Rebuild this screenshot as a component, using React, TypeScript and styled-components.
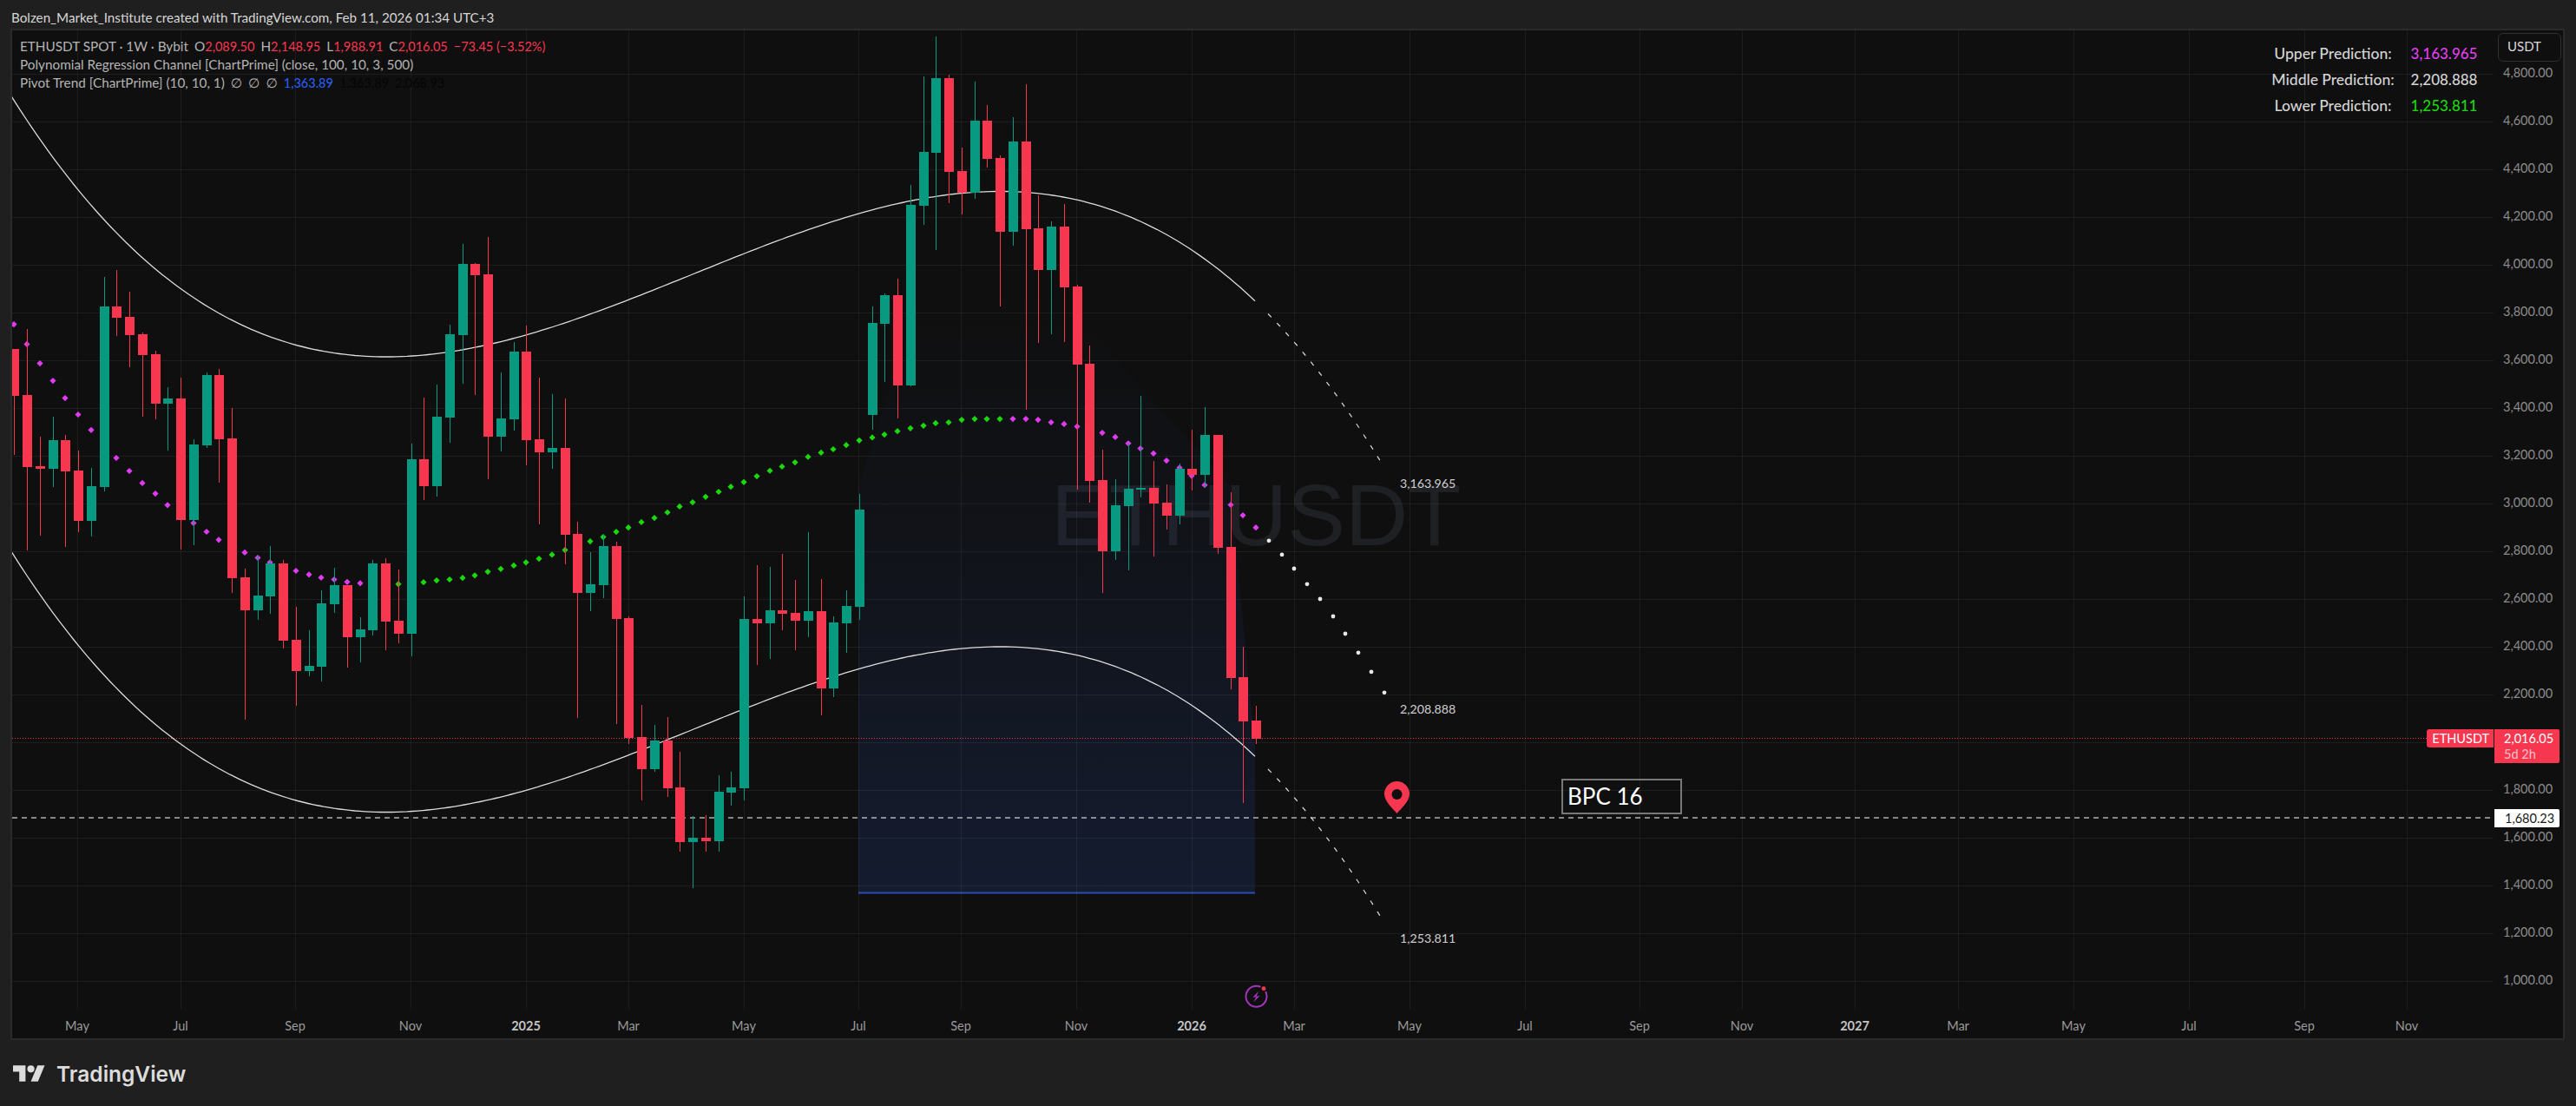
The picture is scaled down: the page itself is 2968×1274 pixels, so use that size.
import React from "react";
import styled, { createGlobalStyle } from "styled-components";

const UI_FONT = `Lato, "Noto Sans", "DejaVu Sans", sans-serif`;

const RED = "#f7374f";
const GREEN = "#089981";
const MAGENTA = "#e03bf2";
const LIME = "#1bd80e";
const BLUE_ZONE = "#2a4fb0";

// page coordinates of the plot area, the svg viewBox uses them directly
const PANE = { x: 14, y: 35, w: 2859, h: 1128 };

type Row = ["r" | "g", number, number, number, number];
type Candle = { up: boolean; wickTop: number; top: number; bottom: number; wickBottom: number };

// rows were read off zoomed crops: y = origin + value / scale
const scan = (origin: number, scale: number, rows: Row[]): Candle[] =>
  rows.map(([c, a, b, d, e]) => ({
    up: c === "g",
    wickTop: origin + a / scale,
    top: origin + b / scale,
    bottom: origin + d / scale,
    wickBottom: origin + e / scale,
  }));

const CANDLES: Candle[] = [
  ...scan(280, 2.8, [
    ["r", 342, 342, 492, 683], ["r", 277, 490, 721, 990], ["r", 625, 720, 728, 943], ["g", 560, 636, 728, 787],
    ["r", 620, 636, 736, 980], ["r", 670, 734, 896, 932], ["g", 726, 784, 896, 945], ["g", 110, 204, 787, 800],
    ["r", 87, 204, 241, 300], ["r", 157, 238, 297, 400], ["r", 288, 294, 361, 560], ["r", 348, 358, 518, 568],
    ["g", 465, 501, 518, 668], ["r", 434, 501, 893, 987], ["g", 633, 650, 893, 973], ["g", 418, 426, 652, 660],
    ["r", 406, 426, 633, 772], ["r", 532, 630, 1081, 1128], ["r", 1050, 1078, 1184, 1536], ["g", 1008, 1137, 1184, 1215],
    ["g", 977, 1033, 1140, 1196], ["r", 1022, 1033, 1282, 1308], ["r", 1173, 1280, 1380, 1492], ["g", 1249, 1364, 1380, 1397],
    ["g", 1120, 1162, 1366, 1414], ["g", 1048, 1103, 1165, 1193], ["r", 1103, 1103, 1271, 1369], ["g", 1207, 1246, 1271, 1352],
    ["g", 1022, 1033, 1249, 1266], ["r", 1016, 1033, 1221, 1313], ["r", 1053, 1218, 1260, 1291], ["g", 647, 697, 1260, 1333],
    ["r", 498, 697, 784, 829], ["g", 456, 560, 784, 818], ["g", 263, 294, 563, 644], ["g", 3, 67, 297, 454],
    ["r", 64, 67, 104, 490], ["r", -20, 101, 624, 762], ["g", 418, 566, 624, 672], ["g", 319, 350, 568, 605],
    ["r", 266, 350, 636, 717], ["r", 434, 633, 675, 907], ["g", 487, 661, 675, 728], ["r", 501, 661, 941, 1036],
    ["r", 899, 938, 1128, 1531], ["g", 997, 1100, 1128, 1187], ["g", 940, 977, 1103, 1145],
  ]),
  ...scan(280, 2.063, [
    ["r", 710, 720, 893, 1143], ["r", 888, 891, 1176, 1190], ["r", 1098, 1174, 1250, 1325], ["g", 1145, 1182, 1250, 1256],
    ["r", 1126, 1182, 1296, 1316], ["r", 1209, 1294, 1424, 1446], ["g", 1362, 1413, 1424, 1533], ["r", 1360, 1413, 1421, 1446],
    ["g", 1265, 1304, 1422, 1446], ["g", 1257, 1294, 1306, 1337], ["g", 840, 893, 1296, 1325], ["r", 765, 893, 904, 1003],
    ["g", 770, 873, 904, 988], ["r", 739, 873, 881, 920], ["r", 800, 879, 897, 968], ["g", 687, 875, 897, 937],
    ["r", 798, 875, 1058, 1122], ["g", 887, 902, 1058, 1079], ["g", 825, 862, 904, 974], ["g", 596, 633, 864, 895],
  ]),
  ...scan(30, 3, [
    ["g", 969, 1026, 1344, 1395], ["g", 924, 930, 1029, 1230], ["r", 873, 930, 1242, 1356], ["g", 549, 618, 1242, 1245],
    ["g", 174, 435, 621, 687], ["g", 36, 180, 438, 774], ["r", 168, 180, 504, 612], ["r", 420, 501, 576, 651],
    ["g", 192, 327, 576, 597], ["r", 273, 327, 459, 489], ["r", 447, 456, 711, 969], ["g", 315, 399, 711, 759],
    ["r", 201, 399, 702, 1326], ["r", 585, 699, 843, 1095], ["g", 675, 693, 843, 1065], ["r", 615, 693, 903, 1092],
  ]),
  ...scan(280, 2.063, [["r", 99, 103, 289, 585], ["r", 243, 287, 565, 617]]),
  ...scan(420, 2.8, [
    ["r", 275, 372, 602, 735], ["g", 370, 454, 602, 629], ["g", 254, 400, 456, 663], ["g", 101, 398, 402, 428],
    ["r", 312, 398, 447, 618], ["r", 387, 445, 487, 531], ["g", 320, 336, 487, 514], ["r", 210, 336, 356, 405],
    ["g", 137, 227, 356, 397], ["r", 227, 227, 591, 609], ["r", 412, 588, 1011, 1046], ["r", 911, 1008, 1151, 1413],
    ["r", 1100, 1148, 1207, 1223],
  ]),
];

const barX = (i: number) => Math.round(16.26 + 14.752 * i);

const toY = (origin: number, scale: number, values: number[]) => values.map((v) => origin + v / scale);

// pivot trend marks, one for each bar
const TREND = [
  ...toY(280, 2.8, [
    262, 326, 388, 444, 500, 553, 603, 650, 693, 735, 774, 808, 845, 875, 903, 931, 957, 978, 998, 1015, 1030, 1045, 1057,
    1069, 1079, 1085, 1093, 1097, 1099, 1100, 1100, 1098, 1094, 1088, 1085, 1080, 1072, 1060, 1051, 1040, 1030, 1018, 1005,
    990, 975, 962, 948,
  ]),
  ...toY(280, 2.063, [
    686, 676, 663, 653, 640, 626, 616, 603, 591, 579, 568, 554, 541, 531, 521, 508, 498, 490, 480, 469, 462, 455, 447, 440,
    434, 428, 426, 420, 418, 418, 418, 418, 418, 420, 426, 430, 436, 443, 451, 461, 476, 488, 500, 517, 534, 553, 575, 598,
    622, 647, 676,
  ]),
];
const trendColor = (i: number) => (i < 30 ? MAGENTA : i < 78 ? LIME : MAGENTA);

const PROJECTION_Y = toY(420, 2.8, [568, 613, 658, 708, 756, 812, 868, 929, 991, 1058]);

// the channel is a cubic regression, so the edges are drawn from the fitted curve
const channel = (x: number) => {
  const u = x - 445;
  return 411 + 3.235e-6 * ((u * u * u) / 3 - (707 * u * u) / 2);
};
const BAND_GAP = 524.5;

const channelPath = (from: number, to: number, dy = 0) => {
  let d = `M${from} ${channel(from) + dy}`;
  for (let x = from + 6; x < to; x += 6) d += ` L${x} ${(channel(x) + dy).toFixed(1)}`;
  return `${d} L${to} ${(channel(to) + dy).toFixed(1)}`;
};

const priceY = (p: number) => 85 + (4800 - p) * 0.275;
const PRICES = Array.from({ length: 20 }, (_, i) => 4800 - i * 200);
const LAST_PRICE_ROW = 2000; // hidden under the last price tag

const TICKS: { x: number; label: string; year?: boolean }[] = [
  { x: 89, label: "May" }, { x: 208, label: "Jul" }, { x: 340, label: "Sep" }, { x: 473, label: "Nov" },
  { x: 606, label: "2025", year: true }, { x: 724, label: "Mar" }, { x: 857, label: "May" }, { x: 989, label: "Jul" },
  { x: 1107, label: "Sep" }, { x: 1240, label: "Nov" }, { x: 1373, label: "2026", year: true }, { x: 1491, label: "Mar" },
  { x: 1624, label: "May" }, { x: 1757, label: "Jul" }, { x: 1889, label: "Sep" }, { x: 2007, label: "Nov" },
  { x: 2137, label: "2027", year: true }, { x: 2256, label: "Mar" }, { x: 2389, label: "May" }, { x: 2522, label: "Jul" },
  { x: 2655, label: "Sep" }, { x: 2773, label: "Nov" },
];

const GlobalStyle = createGlobalStyle`
  html, body {
    margin: 0;
    background: #1f1f1f;
    overflow: hidden;
  }
`;

const Page = styled.div`
  width: 2968px;
  height: 1274px;
  display: flex;
  flex-direction: column;
  background: #1f1f1f;
  font-family: ${UI_FONT};
`;

const Header = styled.div`
  height: 33px;
  box-sizing: border-box;
  padding: 10px 0 0 13px;
  font-size: 15.2px;
  line-height: 20px;
  color: #d6d6d6;
  white-space: nowrap;
`;

const Frame = styled.div`
  margin-left: 12px;
  width: 2943px;
  height: 1165px;
  box-sizing: border-box;
  border: 2px solid #2a2a2a;
  display: grid;
  grid-template-columns: 2859px 80px;
  grid-template-rows: 1128px 33px;
  background: #0f0f0f;
`;

const Pane = styled.div`
  position: relative;
  overflow: hidden;
`;

const Plot = styled.svg`
  position: absolute;
  inset: 0;
  display: block;
`;

const Watermark = styled.div`
  position: absolute;
  left: 1197px;
  top: 503px;
  font-family: "Liberation Sans", sans-serif;
  font-size: 100px;
  line-height: 110px;
  color: #1f2024;
  white-space: nowrap;
`;

const Legend = styled.div`
  position: absolute;
  left: 9px;
  top: 8px;
  font-size: 15.3px;
  line-height: 21px;
  color: #b4b4b4;
  white-space: nowrap;
`;

const LegendRow = styled.div`
  display: flex;
  align-items: baseline;
  gap: 7px;
`;

const Value = styled.span<{ $color?: string }>`
  color: ${(p) => p.$color ?? "inherit"};
  font-size: 14.5px;
`;

const PredictionTable = styled.div`
  position: absolute;
  right: 9px;
  top: 11px;
  display: grid;
  grid-template-columns: 160px 96px;
  grid-auto-rows: 30px;
  align-items: center;
  justify-items: center;
  font-size: 17.5px;
  font-weight: 500;
  color: #d4d4d4;

  ${Value} {
    font-size: 17px;
  }
`;

const ChartNote = styled.div<{ $left: number; $top: number }>`
  position: absolute;
  left: ${(p) => p.$left - PANE.x}px;
  top: ${(p) => p.$top - PANE.y - 10}px;
  font-size: 14.2px;
  line-height: 20px;
  color: #cfcfcf;
`;

const NoteBox = styled.div`
  position: absolute;
  left: 1785px;
  top: 862px;
  width: 139px;
  height: 41px;
  box-sizing: border-box;
  border: 2px solid #787878;
  padding-left: 5px;
  font-size: 26px;
  line-height: 36px;
  color: #ffffff;
`;

const PriceAxis = styled.div`
  position: relative;
  box-sizing: border-box;
  padding: 20.5px 0 0 11px;
  display: flex;
  flex-direction: column;
`;

const PriceLabel = styled.div`
  flex: 0 0 55px;
  line-height: 55px;
  font-size: 14.5px;
  color: #8c8c8c;
`;

const UnitButton = styled.div`
  position: absolute;
  left: 5px;
  top: 3px;
  width: 73px;
  height: 33px;
  box-sizing: border-box;
  border: 1px solid #303030;
  border-radius: 6px;
  background: #0f0f0f;
  padding-left: 10px;
  font-size: 15px;
  line-height: 28px;
  color: #d8d8d8;
`;

const SymbolTag = styled.div`
  position: absolute;
  right: 100%;
  top: 805px;
  height: 21px;
  box-sizing: border-box;
  padding: 0 5px 0 6px;
  border-radius: 3px 0 0 3px;
  background: ${RED};
  font-size: 14.5px;
  line-height: 21px;
  color: #ffffff;
`;

const PriceTag = styled.div`
  position: absolute;
  left: 1px;
  top: 805px;
  width: 75px;
  height: 39px;
  box-sizing: border-box;
  padding: 2px 0 0 11px;
  border-radius: 0 2px 2px 0;
  background: ${RED};
  font-size: 14.5px;
  line-height: 18px;
  color: #ffffff;
`;

const Countdown = styled.div`
  color: #ffc2cb;
`;

const LevelTag = styled.div`
  position: absolute;
  left: 1px;
  top: 897px;
  width: 75px;
  height: 21px;
  box-sizing: border-box;
  padding-left: 12px;
  border-radius: 0 2px 2px 0;
  background: #ffffff;
  font-size: 14.5px;
  line-height: 21px;
  color: #1a1a1a;
`;

const TimeAxis = styled.div`
  grid-column: 1 / 3;
  position: relative;
`;

const TimeTick = styled.span<{ $year?: boolean }>`
  position: absolute;
  top: 9px;
  transform: translateX(-50%);
  font-size: 14.5px;
  line-height: 20px;
  font-weight: ${(p) => (p.$year ? 700 : 400)};
  color: ${(p) => (p.$year ? "#c4c4c4" : "#9a9a9a")};
`;

const Footer = styled.div`
  display: flex;
  align-items: center;
  gap: 13px;
  padding: 25px 0 0 15px;
`;

const LogoMark = styled.svg`
  display: block;
  width: 37px;
  height: 29px;
`;

const LogoText = styled.span`
  font-family: Inter, "Noto Sans", sans-serif;
  font-size: 24.5px;
  line-height: 29px;
  font-weight: 600;
  color: #dcdcdc;
`;

const Chart = () => (
  <Plot width={PANE.w} height={PANE.h} viewBox={`${PANE.x} ${PANE.y} ${PANE.w} ${PANE.h}`}>
    <defs>
      <linearGradient id="zone" gradientUnits="userSpaceOnUse" x1="0" y1="340" x2="0" y2="1029">
        <stop offset="0" stopColor={BLUE_ZONE} stopOpacity="0" />
        <stop offset="0.4" stopColor={BLUE_ZONE} stopOpacity="0.06" />
        <stop offset="1" stopColor={BLUE_ZONE} stopOpacity="0.2" />
      </linearGradient>
    </defs>

    <polygon points="989,1029 989,560 1060,340 1220,340 1417,560 1446,860 1446,1029" fill="url(#zone)" />
    <rect x="989" y="1027.5" width="457" height="2" fill={BLUE_ZONE} />

    <g stroke="#ffffff" strokeOpacity="0.06" shapeRendering="crispEdges">
      {PRICES.map((p) => (
        <line key={p} x1={PANE.x} x2={PANE.x + PANE.w} y1={Math.round(priceY(p))} y2={Math.round(priceY(p))} />
      ))}
      {TICKS.map((t) => (
        <line key={t.x} x1={t.x} x2={t.x} y1={PANE.y} y2={PANE.y + PANE.h} />
      ))}
    </g>

    <line x1={PANE.x} x2={PANE.x + PANE.w} y1="850.5" y2="850.5" stroke={RED} strokeDasharray="1 2" />
    <line x1={PANE.x} x2={PANE.x + PANE.w} y1="942" y2="942" stroke="#ffffff" strokeDasharray="6 5" />

    <g fill="none" stroke="#dcdcdc">
      <path d={channelPath(13, 1446)} strokeWidth="1.3" />
      <path d={channelPath(13, 1446, BAND_GAP)} strokeWidth="1.3" />
      <path d={channelPath(1461, 1590)} strokeWidth="1.2" strokeDasharray="5.5 9.3" />
      <path d={channelPath(1461, 1590, BAND_GAP)} strokeWidth="1.2" strokeDasharray="5.5 9.3" />
    </g>

    {TREND.map((y, i) => {
      const x = barX(i);
      return (
        <polygon key={i} points={`${x},${y - 3.6} ${x + 3.6},${y} ${x},${y + 3.6} ${x - 3.6},${y}`} fill={trendColor(i)} />
      );
    })}
    {PROJECTION_Y.map((y, i) => (
      <circle key={i} cx={barX(98 + i)} cy={y} r="2.4" fill="#e8e8e8" />
    ))}

    <g shapeRendering="crispEdges">
      {CANDLES.map((c, i) => {
        const x = barX(i);
        const color = c.up ? GREEN : RED;
        return (
          <g key={i} fill={color}>
            <rect x={x} y={c.wickTop} width="1" height={c.wickBottom - c.wickTop} />
            <rect x={x - 5} y={c.top} width="11" height={c.bottom - c.top} />
          </g>
        );
      })}
    </g>

    <path
      d="M1609.5 900a14.5 14.5 0 0 1 14.5 14.5c0 9-10 17-14.5 22.5c-4.5-5.5-14.5-13.5-14.5-22.5a14.5 14.5 0 0 1 14.5-14.5z"
      fill={RED}
    />
    <circle cx="1609.5" cy="915" r="6" fill="#0f0f0f" />

    <circle cx="1447.5" cy="1147.7" r="12" fill="none" stroke="#a235bd" strokeWidth="2" />
    <path d="M1450 1141.7L1443.3 1149L1447.3 1148.3L1444.3 1154.3L1451.7 1147L1447.7 1147.7Z" fill="#a235bd" />
    <circle cx="1456" cy="1138.7" r="3.2" fill={RED} stroke="#0f0f0f" strokeWidth="1.5" />
  </Plot>
);

const App: React.FC = () => (
  <Page>
    <GlobalStyle />
    <Header>Bolzen_Market_Institute created with TradingView.com, Feb 11, 2026 01:34 UTC+3</Header>

    <Frame>
      <Pane>
        <Watermark>ETHUSDT</Watermark>
        <Chart />

        <Legend>
          <LegendRow>
            <span>ETHUSDT SPOT · 1W · Bybit</span>
            <span>O<Value $color={RED}>2,089.50</Value></span>
            <span>H<Value $color={RED}>2,148.95</Value></span>
            <span>L<Value $color={RED}>1,988.91</Value></span>
            <span>C<Value $color={RED}>2,016.05</Value></span>
            <Value $color={RED}>−73.45 (−3.52%)</Value>
          </LegendRow>
          <LegendRow>Polynomial Regression Channel [ChartPrime] (close, 100, 10, 3, 500)</LegendRow>
          <LegendRow>
            <span>Pivot Trend [ChartPrime] (10, 10, 1)</span>
            <span>∅</span>
            <span>∅</span>
            <span>∅</span>
            <Value $color="#2962ff">1,363.89</Value>
            <Value $color="#050505">1,363.89</Value>
            <Value $color="#050505">2,068.93</Value>
          </LegendRow>
        </Legend>

        <PredictionTable>
          <span>Upper Prediction:</span>
          <Value $color="#e040f0">3,163.965</Value>
          <span>Middle Prediction:</span>
          <Value>2,208.888</Value>
          <span>Lower Prediction:</span>
          <Value $color="#1bd80e">1,253.811</Value>
        </PredictionTable>

        <ChartNote $left={1613} $top={557}>3,163.965</ChartNote>
        <ChartNote $left={1613} $top={817}>2,208.888</ChartNote>
        <ChartNote $left={1613} $top={1081}>1,253.811</ChartNote>
        <NoteBox>BPC 16</NoteBox>
      </Pane>

      <PriceAxis>
        {PRICES.map((p) => (
          <PriceLabel key={p}>{p === LAST_PRICE_ROW ? "" : `${p.toLocaleString("en-US")}.00`}</PriceLabel>
        ))}
        <UnitButton>USDT</UnitButton>
        <SymbolTag>ETHUSDT</SymbolTag>
        <PriceTag>
          2,016.05
          <Countdown>5d 2h</Countdown>
        </PriceTag>
        <LevelTag>1,680.23</LevelTag>
      </PriceAxis>

      <TimeAxis>
        {TICKS.map((t) => (
          <TimeTick key={t.x} $year={t.year} style={{ left: t.x - PANE.x }}>
            {t.label}
          </TimeTick>
        ))}
      </TimeAxis>
    </Frame>

    <Footer>
      <LogoMark viewBox="0 0 36 28">
        <path d="M14 22H7V11H0V4h14v18zM28 22h-8l7.5-18h8L28 22z" fill="#dcdcdc" />
        <circle cx="20" cy="8" r="4" fill="#dcdcdc" />
      </LogoMark>
      <LogoText>TradingView</LogoText>
    </Footer>
  </Page>
);

export default App;
